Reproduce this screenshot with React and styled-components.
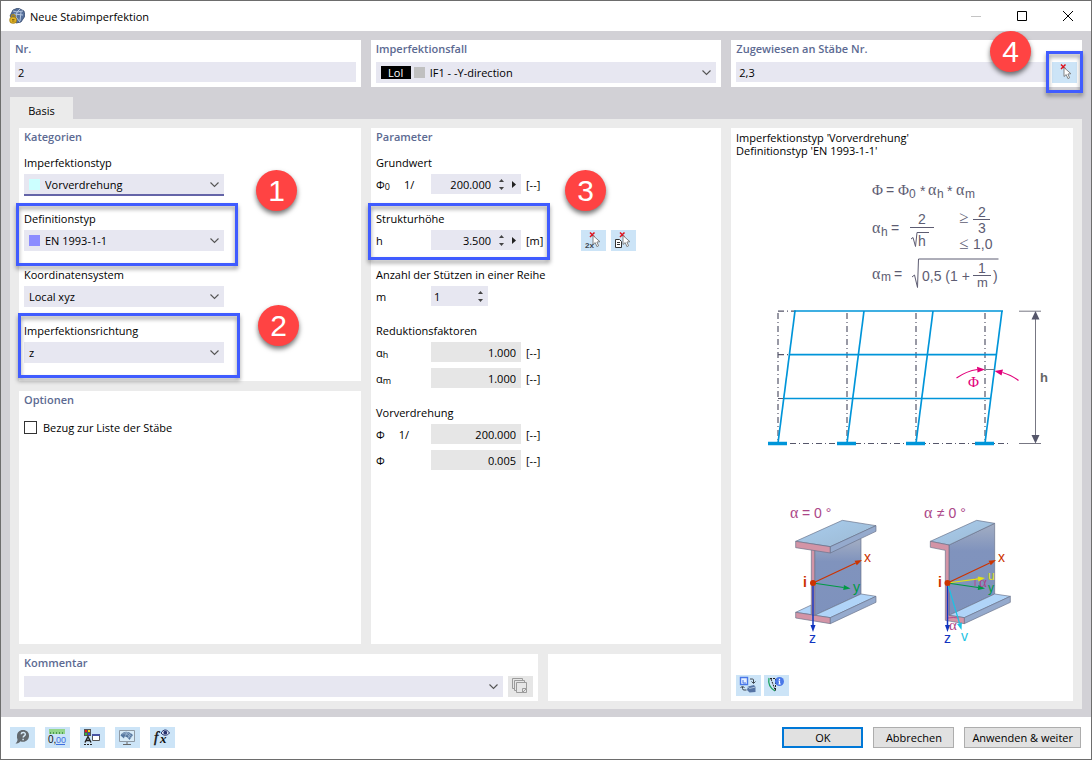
import React from 'react'
import styled, { createGlobalStyle, css } from "styled-components";

const GlobalStyle = createGlobalStyle`
* {
  box-sizing: border-box;
}
body {
  margin: 0;
  background: #fff;
}
body, input, select, button {
  font-family: "Open Sans", "Noto Sans", sans-serif;
  font-size: 11px;
  color: #000;
}
`;

const Window = styled.div`
display: flex;
flex-direction: column;
min-height: 100vh;
border: 1px solid #6d6d6d;
background: #fff;
`;

const TitleBar = styled.header`
display: flex;
align-items: center;
gap: 5px;
height: 30px;
padding-left: 8px;
`;

const Title = styled.h1`
flex: 1;
margin: 0;
font-size: 11px;
font-weight: 400;
`;

const CaptionButtons = styled.div`
display: flex;
`;

const CaptionButton = styled.button`
display: flex;
align-items: center;
justify-content: center;
width: 46px;
height: 30px;
padding: 0;
border: none;
background: none;
`;

const Body = styled.main`
flex: 1;
display: flex;
flex-direction: column;
padding: 9px 9px 8px;
background: #d2d1d6;
`;

const TopRow = styled.div`
display: grid;
grid-template-columns: repeat(3, minmax(0, 1fr));
gap: 10px;
margin-bottom: 10px;
`;

const Panel = styled.section`
position: relative;
padding: 0 5px 4px;
background: #fff;
`;

const PanelTitle = styled.h2`
margin: 0 0 ${props => props.$gap || 4}px;
font-size: 11px;
font-weight: 600;
line-height: 18px;
color: #5c6a92;
`;

const Tab = styled.button`
align-self: flex-start;
width: 63px;
height: 22px;
padding: 4px 0 0;
border: none;
background: #ebebeb;
`;

const Page = styled.div`
flex: 1;
display: grid;
grid-template-columns: minmax(0, 702fr) minmax(0, 342fr);
gap: 10px;
padding: 9px 9px 8px;
background: #ebebeb;
`;

const Main = styled.div`
display: flex;
flex-direction: column;
gap: 10px;
`;

const Columns = styled.div`
flex: 1;
display: grid;
grid-template-columns: minmax(0, 342fr) minmax(0, 350fr);
gap: 10px;
`;

const LeftColumn = styled.div`
display: grid;
grid-template-rows: 1fr 1fr;
gap: 10px;
`;

const BottomRow = styled.div`
display: grid;
grid-template-columns: minmax(0, 519fr) minmax(0, 173fr);
gap: 10px;
min-height: 47px;
`;

const InfoPanel = styled(Panel)`
display: flex;
flex-direction: column;
padding: 3px 5px 5px;
`;

const InfoText = styled.p`
margin: 0;
line-height: 13px;
`;

const Drawing = styled.svg`
display: block;
width: 100%;
height: auto;
margin-top: ${props => props.$space}px;
`;

const InfoTools = styled.div`
display: flex;
gap: 3px;
margin-top: auto;
`;

const Fields = styled.div`
display: flex;
flex-direction: column;
gap: ${props => props.$gap}px;
`;

const Field = styled.div`
display: flex;
flex-direction: column;
`;

const Label = styled.label`
margin-bottom: 2px;
line-height: 18px;
`;

const Group = styled.div`
display: flex;
flex-direction: column;
gap: 6px;
`;

const GroupTitle = styled.div`
margin-bottom: -4px;
line-height: 18px;
`;

const Line = styled.div`
display: flex;
gap: 5px;
`;

const TextInput = styled.input`
flex: 1;
min-width: 0;
width: 100%;
height: 20px;
padding: 1px 3px 0;
border: none;
outline: none;
background: #e7e7f1;
`;

const SelectBox = styled.div`
display: grid;
flex: ${props => props.$wide ? 1 : "none"};
width: ${props => props.$wide ? "auto" : "200px"};
height: 21px;
align-items: center;
background: #e7e7f1;
${props => props.$focused && css`
box-shadow: inset 0 -1px #6464a8, 0 1px #6464a8;
`}
> * {
  grid-area: 1 / 1;
}
> svg {
  justify-self: end;
  margin-right: 5px;
  pointer-events: none;
}
`;

const StyledSelect = styled.select`
appearance: none;
align-self: start;
width: 100%;
height: 20px;
padding: 0 20px 0 ${props => props.$indent}px;
border: none;
outline: none;
background: none;
`;

const Marks = styled.span`
display: flex;
align-items: center;
gap: 3px;
padding-left: 5px;
pointer-events: none;
`;

const Swatch = styled.span`
width: 11px;
height: 11px;
background: ${props => props.$color};
`;

const CaseTag = styled.span`
width: 30px;
height: 13px;
line-height: 13px;
text-align: center;
color: #fff;
background: #000;
`;

const Row = styled.div`
display: flex;
align-items: center;
height: 20px;
`;

const Symbol = styled.label`
display: flex;
gap: 14px;
width: 55px;
sub {
  font-size: 9px;
  line-height: 1;
  vertical-align: -1px;
}
`;

const NumberBox = styled.div`
display: flex;
align-items: center;
gap: 5px;
width: ${props => props.$narrow ? 57 : 90}px;
height: 20px;
padding-right: 4px;
background: ${props => props.$readOnly ? "#e6e6e6" : "#e7e7f1"};
`;

const NumberInput = styled.input`
flex: 1;
min-width: 0;
height: 20px;
padding: 1px ${props => props.readOnly ? 1 : 2}px 0 3px;
border: none;
outline: none;
background: none;
text-align: ${props => props.$left ? "left" : "right"};
`;

const Spinner = styled.span`
display: flex;
flex-direction: column;
gap: 1px;
`;

const SmallButton = styled.button`
display: flex;
align-items: center;
justify-content: center;
width: 7px;
height: 7px;
padding: 0;
border: none;
background: none;
`;

const Unit = styled.span`
width: 60px;
padding-left: 5px;
`;

const IconButton = styled.button`
flex: none;
width: 25px;
height: 21px;
padding: 0;
border: none;
background: ${props => props.disabled ? "#e6e6e6" : "#cce4f7"};
svg {
  display: block;
}
`;

const RowTools = styled.div`
display: flex;
gap: 5px;
`;

const CheckLabel = styled.label`
display: flex;
align-items: center;
gap: 6px;
height: 20px;
`;

const Checkbox = styled.input`
appearance: none;
width: 13px;
height: 13px;
margin: 0;
border: 1px solid #333;
background: #fff;
&:checked {
  background: #5c6a92;
}
`;

const Footer = styled.footer`
display: flex;
align-items: center;
gap: 10px;
height: 42px;
padding: 0 10px 1px 9px;
`;

const FooterTools = styled.div`
flex: 1;
display: flex;
gap: 10px;
`;

const DialogButton = styled.button`
min-width: 81px;
height: 21px;
padding: 0 7px;
border: ${props => props.$primary ? "2px solid #0078d7" : "1px solid #adadad"};
background: #e1e1e1;
white-space: nowrap;
`;

const Highlight = styled.div`
position: absolute;
z-index: 1;
border: 3px solid #405cff;
filter: drop-shadow(0 3px 2px rgba(0, 0, 0, 0.4));
pointer-events: none;
`;

const TypeHighlight = styled(Highlight)`
top: 75px;
left: -3px;
width: 222px;
height: 63px;
`;

const DirectionHighlight = styled(Highlight)`
top: 185px;
left: -1px;
width: 222px;
height: 65px;
`;

const HeightHighlight = styled(Highlight)`
top: 75px;
left: -3px;
width: 182px;
height: 57px;
`;

const PickHighlight = styled(Highlight)`
top: 11px;
right: -1px;
width: 37px;
height: 42px;
`;

const Step = styled.div`
position: absolute;
z-index: 2;
top: ${props => props.$top}px;
left: ${props => props.$left};
right: ${props => props.$right};
width: 41px;
height: 41px;
border-radius: 50%;
background: #ff4343;
box-shadow: 0 3px 5px rgba(0, 0, 0, 0.55);
color: #fff;
font: 30px/41px "Liberation Sans", Arial, sans-serif;
text-align: center;
`;

const Chevron = () => (
  <svg width="9" height="6" viewBox="0 0 9 6" fill="none" stroke="#555" strokeWidth="1.1">
    <path d="M.5.5l4 4 4-4" />
  </svg>
);

const AppIcon = () => (
  <svg width="16" height="16" viewBox="0 0 16 16">
    <path d="M1 8L4 2 9 0l6 3 1 5-4 6-5 1z" fill="#56709c" stroke="#34476b" strokeWidth=".8" />
    <path d="M4 3l4 1 6-1M8 4l-1 5 4 5M8 4l3-3M12 4l-1 9M5 6l9 1" fill="none" stroke="#b5c7e0" />
    <path d="M2.500 9.500V8.500a1.800 1.800 0 0 1 3.600 0v1" fill="none" stroke="#b18a16" strokeWidth="1.300" />
    <rect x=".8" y="9" width="6.700" height="6.200" rx="2.500" fill="#e3b526" stroke="#9a7714" strokeWidth=".8" />
    <path d="M3 11.500h2.500M3 13h2.500" stroke="#8a6a10" />
  </svg>
);

const Pointer = () => (
  <>
    <path d="M9 2.500l4.500 4.500M13.500 2.500L9 7" stroke="#e0101c" strokeWidth="1.500" />
    <path d="M12 5.500v9l2.200-1.900 1.700 4 1.700-.8-1.700-3.800 3-.3z" fill="#fff" stroke="#777" strokeWidth=".9" />
  </>
);

const Icon = ({ children }) => (
  <svg width="25" height="21" viewBox="0 0 25 21" fill="none">{children}</svg>
);

const PickIcon = () => <Icon><Pointer /></Icon>;

const PickTwoIcon = () => (
  <Icon>
    <Pointer />
    <text x="4" y="18" fontSize="8" fontWeight="700" fontFamily="Liberation Sans, sans-serif" fill="#3d4650">2x</text>
  </Icon>
);

const PickListIcon = () => (
  <Icon>
    <path d="M4.500 9.500h4l2 2v6h-6z" fill="#fff" stroke="#333" />
    <path d="M6 12.500h3M6 14.500h3" stroke="#333" />
    <Pointer />
  </Icon>
);

const CopyIcon = () => (
  <Icon>
    <g fill="#e6e6e6" stroke="#9b9b9b">
      <path d="M4.500 2.500h10v10h-10z" />
      <path d="M6.500 4.500h10v10h-10z" />
      <path d="M8.500 6.500h10v10h-10z" />
      <path d="M14.500 16.500v-4h4M15 16l3-3" />
    </g>
  </Icon>
);

const HelpIcon = () => (
  <Icon>
    <path d="M13 3c3.700 0 6 2.300 6 5.700 0 3.500-2.500 6-6 6-1 0-1.800-.1-2.500-.5-1 1.500-3 2.300-5 2.300 1.200-.9 2-2.500 2-4A6 6 0 0 1 7 9c0-3.500 2.500-6 6-6z" fill="#63696e" />
    <path d="M11.200 7.300c.2-2.500 4.300-2.300 4.100.1-.1 1.500-2.100 1.500-2.100 3.100M13.100 11.800v1.400" stroke="#d5e8f6" strokeWidth="1.500" />
  </Icon>
);

const UnitsIcon = () => (
  <Icon>
    <path d="M4 2h16v5H4z" fill="#93d58b" />
    <path d="M5.500 7V5M8.500 7V5M11.500 7V5M14.500 7V5M17.500 7V5" stroke="#4c9a4e" />
    <text x="3" y="16" fontSize="10" fontFamily="Liberation Sans, sans-serif" fill="#111">0,</text>
    <text x="11" y="16" fontSize="9" fontFamily="Liberation Sans, sans-serif" fill="#3e6fe0">00</text>
    <path d="M11 17.500h9" stroke="#3e6fe0" />
  </Icon>
);

const DisplayIcon = () => (
  <Icon>
    <path d="M4 2h7v7H4z" fill="#555" />
    <path d="M5 3h2v2H5z" fill="#ef1c1c" />
    <path d="M8 3h2v2H8z" fill="#f4d911" />
    <path d="M5 6h2v2H5z" fill="#37b53c" />
    <path d="M8 6h2v2H8z" fill="#374bd9" />
    <path d="M5 15.500l3-6 3 6M6.500 13.500h3" stroke="#222" strokeWidth="1.400" />
    <path d="M4 17.500h8" stroke="#222" strokeDasharray="2 1" />
    <path d="M12 12.500h1" stroke="#222" />
    <path d="M12.500 7.500h7v6h-7z" fill="#fff" stroke="#555" />
    <path d="M12 8h8" stroke="#4854a3" strokeWidth="2" />
  </Icon>
);

const ScreenIcon = () => (
  <Icon>
    <path d="M4.500 3.500h15v11h-15z" fill="#d8ebf8" stroke="#8f9aa5" />
    <path d="M5.500 8.500C8 4 13 3.500 18 8l-3.500 5C13 10.500 11 9.500 9.500 9.500l-.5 2z" fill="#56779f" />
    <path d="M7 7c4-1 7 1 8.500 4M9.500 5.500c3.500 0 5.500 1.500 7 4M12.500 5c-1 1.500-2 3-2 4.500M15.500 6.500c-1.200 1.500-2 3-2.200 4.500" stroke="#b5cbe2" strokeWidth=".6" />
    <path d="M12 15v2M8 17.500h8" stroke="#666" />
  </Icon>
);

const FormulaIcon = () => (
  <Icon>
    <text x="4" y="15" fontSize="15" fontStyle="italic" fontFamily="Liberation Serif, serif" fill="#111" stroke="#111" strokeWidth=".4">f</text>
    <text x="10" y="16" fontSize="13" fontStyle="italic" fontWeight="700" fontFamily="Liberation Serif, serif" fill="#111">x</text>
    <path d="M11 6c2.500-4 6-4 8.500 0-2.500 3-6 3-8.500 0z" fill="#e6edfa" stroke="#26306c" />
    <circle cx="15.300" cy="5.700" r="1.900" fill="#26306c" />
  </Icon>
);

const SwapIcon = () => (
  <Icon>
    <path d="M4.500 2.500h7v7h-7z" fill="#e9f1ff" stroke="#4a78e8" strokeWidth="1.400" />
    <path d="M7 5v3h3" stroke="#4a78e8" />
    <path d="M14 4h2.500q1 0 1 1v3M15.500 6.500l2 2 2-2M10.500 15H8q-1.500 0-1.500-1.500V12M4.500 13l2-2 2 2" stroke="#3d4650" />
    <path d="M12 11.500l6-1.500 1.500 2v5l-6 .5L11 15z" fill="#5674a5" />
    <path d="M12 11.500l1.500 2 6-1.500" stroke="#a9bdd8" />
  </Icon>
);

const ShapeInfoIcon = () => (
  <Icon>
    <path d="M5 3c-1 5 1 10 6 13" stroke="#1fa463" strokeWidth="1.300" />
    <path d="M6 3.500h5.500V16M7 4l4.500 12" stroke="#222" strokeDasharray="2 1" />
    <circle cx="15.500" cy="6.500" r="4.500" fill="#4a78e8" />
    <path d="M15.500 3.700v1.200M14.500 6h1v3M14.500 9h2.200" stroke="#fff" strokeWidth="1.200" />
  </Icon>
);

const Select = ({ id, value, color, tag, wide, focused, label }) => {
  let indent = 5;
  if (color) indent = 21;
  if (tag) indent = 54;
  return (
    <SelectBox $wide={wide} $focused={focused}>
      {(color || tag) &&
        <Marks>
          {tag && <CaseTag>{tag}</CaseTag>}
          <Swatch $color={color} />
        </Marks>}
      <StyledSelect id={id} $indent={indent} aria-label={label}>
        <option>{value}</option>
      </StyledSelect>
      <Chevron />
    </SelectBox>
  )
}

const SelectField = ({ id, label, ...rest }) => (
  <Field>
    <Label htmlFor={id}>{label}</Label>
    <Select id={id} {...rest} />
  </Field>
);

const NumberRow = ({ id, symbol, sub, prefix, value, unit, editable, menu, children }) => (
  <Row>
    <Symbol htmlFor={id}>
      <span>{symbol}{sub && <sub>{sub}</sub>}</span>
      {prefix && <span>{prefix}</span>}
    </Symbol>
    <NumberBox $readOnly={!editable} $narrow={editable && !menu}>
      <NumberInput id={id} defaultValue={value} readOnly={!editable} $left={editable && !menu} />
      {editable &&
        <Spinner>
          <SmallButton aria-label="Erhöhen">
            <svg width="5" height="3" viewBox="0 0 5 3"><path d="M0 3L2.500 0 5 3z" fill="#444" /></svg>
          </SmallButton>
          <SmallButton aria-label="Verringern">
            <svg width="5" height="3" viewBox="0 0 5 3"><path d="M0 0l2.500 3L5 0z" fill="#444" /></svg>
          </SmallButton>
        </Spinner>}
      {menu &&
        <SmallButton aria-label="Mehr">
          <svg width="4" height="7" viewBox="0 0 4 7"><path d="M0 0l4 3.500L0 7z" fill="#222" /></svg>
        </SmallButton>}
    </NumberBox>
    {unit && <Unit>{unit}</Unit>}
    {children && <RowTools>{children}</RowTools>}
  </Row>
);

const Arrow = ({ from, to, color, size = 7, width = 1.2 }) => {
  const angle = Math.atan2(to[1] - from[1], to[0] - from[0]);
  const bx = to[0] - size * Math.cos(angle);
  const by = to[1] - size * Math.sin(angle);
  const dx = size * 0.36 * Math.sin(angle);
  const dy = size * 0.36 * Math.cos(angle);
  return (
    <g fill={color} stroke="none">
      <path d={`M${from[0]} ${from[1]}L${bx} ${by}`} stroke={color} strokeWidth={width} />
      <path d={`M${to[0]} ${to[1]}L${bx + dx} ${by - dy}L${bx - dx} ${by + dy}z`} />
    </g>
  )
}

const SANS = "Liberation Sans, Arial, sans-serif";
const SERIF = "Liberation Serif, serif";

const Greek = ({ children, ...rest }) => <text fontFamily={SERIF} fontSize="15" {...rest}>{children}</text>;

const FormulaDrawing = () => (
  <Drawing viewBox="736 158 332 298" $space={1} role="img" aria-label="Vorverdrehung">
    <g fill="#5d5c72" fontFamily={SANS} fontSize="14">
      <Greek x="872" y="195">Φ</Greek>
      <text x="886" y="195">=</text>
      <Greek x="898" y="195">Φ</Greek>
      <text x="909" y="198" fontSize="12">0</text>
      <text x="920" y="196">*</text>
      <Greek x="928" y="195" fontSize="16">α</Greek>
      <text x="937" y="198" fontSize="12">h</text>
      <text x="947" y="196">*</text>
      <Greek x="956" y="195" fontSize="16">α</Greek>
      <text x="965" y="198" fontSize="12">m</text>

      <Greek x="872" y="233" fontSize="16">α</Greek>
      <text x="881" y="236" fontSize="12">h</text>
      <text x="891" y="233">=</text>
      <text x="918" y="224">2</text>
      <text x="918" y="246">h</text>
      <Greek x="959" y="223" fontSize="17">≥</Greek>
      <text x="978" y="217">2</text>
      <text x="978" y="233">3</text>
      <Greek x="959" y="249" fontSize="17">≤</Greek>
      <text x="973" y="249">1,0</text>

      <Greek x="872" y="279" fontSize="16">α</Greek>
      <text x="881" y="281" fontSize="12">m</text>
      <text x="894" y="279">=</text>
      <text x="922" y="281">0,5 (1 +</text>
      <text x="978" y="273">1</text>
      <text x="977" y="287" fontSize="13">m</text>
      <text x="993" y="281">)</text>
    </g>
    <g fill="none" stroke="#5d5c72">
      <path d="M910 227.500h24M973 219.500h17M973 275.500h18" />
      <path d="M911 239l2-1.500 2.500 9 1.500-14H929" />
      <path d="M912 277l2.500-2 3 12.500 1-28.500H998.500" />
    </g>

    <g fill="none" stroke="#55566a" strokeWidth="1.200" strokeDasharray="6 3 1 3">
      {[778, 847, 916, 985].map(x => <path key={x} d={`M${x} 313V442`} />)}
      <path d="M778 311.200h18M778 354.700h12M778 398.500h8M790 443.500H1008" />
    </g>
    <g fill="none" stroke="#0095d9" strokeWidth="1.700">
      {[778, 847, 916, 985].map(x => <path key={x} d={`M${x} 443L${x + 17} 311`} />)}
      <path d="M794 311H1003M789.500 354.700H997M784 398.500H991" />
      {[778, 847, 916, 985].map(x => <path key={x} d={`M${x - 10} 443.500h19`} strokeWidth="3.500" />)}
    </g>
    <path d="M1019 311.200h22M1019 443.500h22M1035.500 313v128M986 369.500h8" fill="none" stroke="#777783" />
    <path d="M1035.500 311l4 8.500h-8zM1035.500 443.500l4-8.500h-8z" fill="#55566a" />
    <text x="1040" y="382" fontSize="13" fontWeight="700" fontFamily={SANS} fill="#666">h</text>
    <g fill="none" stroke="#e2007a" strokeWidth="1.200">
      <path d="M956.500 378q10-7 21-8.500M1018.500 380.500q-7-5.500-16-8" />
      <path d="M985 369.500l-8-2.700.5 5.600zM994.500 371l8.500-1.500-1.500 6z" fill="#e2007a" stroke="none" />
    </g>
    <Greek x="968" y="387" fill="#e2007a">Φ</Greek>
  </Drawing>
);

const BeamDrawing = () => (
  <Drawing viewBox="736 502 332 148" $space={46} role="img" aria-label="Stabachsen">
    <defs>
      <linearGradient id="web" x1="0" y1="0" x2="0" y2="1">
        <stop offset="0" stopColor="#a3aec3" />
        <stop offset=".3" stopColor="#8093bd" />
        <stop offset="1" stopColor="#7e92bd" />
      </linearGradient>
      <linearGradient id="flange" x1="0" y1="0" x2="1" y2="1">
        <stop offset="0" stopColor="#a9cdee" />
        <stop offset="1" stopColor="#9cb9d3" />
      </linearGradient>
    </defs>
    <g transform="translate(760 490) scale(.33333)" stroke="#68718a" strokeWidth="2" strokeLinejoin="round">
      <path d="M164 146H303V312L164 376z" fill="url(#web)" />
      <path d="M107 367l47-22v29zM164 376L303 312l45 7L211 383z" fill="#b0d4f8" />
      <path d="M107 367l104 16v18L107 384z" fill="#d394a6" />
      <path d="M211 383l137-64v18L211 401z" fill="#95aacd" />
      <path d="M154 176l10 2v198l-10-2z" fill="#d394a6" />
      <path d="M107 154L247 91l101 16L211 170z" fill="url(#flange)" />
      <path d="M107 154l104 16v19L107 173z" fill="#d394a6" />
      <path d="M211 170l137-63v17L211 189z" fill="#95aacd" />

      <path d="M567 165L704 100V312L567 376z" fill="url(#web)" />
      <path d="M567 376L704 312l47 7L613 383z" fill="#b0d4f8" />
      <path d="M613 383l138-64v18L613 401z" fill="#95aacd" />
      <path d="M511 154l139-63 54 9L567 165z" fill="url(#flange)" />
      <path d="M511 154l56 11V376l46 7v18l-57-10V181l-45-9z" fill="#d394a6" />
    </g>
    <g fill="none" stroke="#b34a8e">
      <path d="M975 578v8M948 618q5-1 11 0" />
    </g>
    <Arrow from={[813, 583]} to={[813, 632]} color="#1034c0" width={1.5} />
    <Arrow from={[813, 583]} to={[850.500, 588.500]} color="#009a44" />
    <Arrow from={[813, 583]} to={[862, 560]} color="#cc3300" />
    <Arrow from={[947.500, 583]} to={[947.500, 632]} color="#1034c0" width={1.5} />
    <Arrow from={[947.500, 583]} to={[961.500, 630]} color="#1cc3e4" />
    <Arrow from={[947.500, 583]} to={[985, 588.500]} color="#009a44" />
    <Arrow from={[947.500, 583]} to={[985, 578]} color="#e3e315" />
    <Arrow from={[947.500, 583]} to={[996, 560]} color="#cc3300" />
    <circle cx="813" cy="583" r="3" fill="#cc3300" />
    <circle cx="947.500" cy="583" r="3" fill="#cc3300" />
    <g fontFamily={SANS} fontSize="14">
      <g fill="#cc3300">
        <text x="803" y="587" fontWeight="700">i</text>
        <text x="864" y="562">x</text>
        <text x="938" y="587" fontWeight="700">i</text>
        <text x="998" y="562">x</text>
      </g>
      <text x="853" y="592" fill="#009a44">y</text>
      <text x="809" y="643" fill="#1034c0">z</text>
      <text x="988" y="580" fontSize="12" fill="#e3e315">u</text>
      <text x="988" y="592" fontSize="12" fill="#009a44">y</text>
      <text x="944" y="643" fill="#1034c0">z</text>
      <text x="961" y="641" fill="#1cc3e4">v</text>
    </g>
    <g fill="#ab4688" fontFamily={SANS} fontSize="14">
      <Greek x="979" y="587">α</Greek>
      <Greek x="949" y="630">α</Greek>
      <Greek x="790" y="518" fontSize="16">α</Greek>
      <text x="802" y="518">= 0 °</text>
      <Greek x="924" y="518" fontSize="16">α</Greek>
      <text x="937" y="518">≠ 0 °</text>
    </g>
  </Drawing>
);

const App = () => {
  return (
    <Window>
      <GlobalStyle />
      <TitleBar>
        <AppIcon />
        <Title>Neue Stabimperfektion</Title>
        <CaptionButtons>
          <CaptionButton aria-label="Minimieren">
            <svg width="10" height="10" viewBox="0 0 10 10"><path d="M0 5.500h10" stroke="#c4c4c4" /></svg>
          </CaptionButton>
          <CaptionButton aria-label="Maximieren">
            <svg width="10" height="10" viewBox="0 0 10 10"><path d="M.5.5h9v9h-9z" fill="none" stroke="#000" /></svg>
          </CaptionButton>
          <CaptionButton aria-label="Schließen">
            <svg width="10" height="10" viewBox="0 0 10 10"><path d="M0 0l10 10M10 0L0 10" stroke="#000" /></svg>
          </CaptionButton>
        </CaptionButtons>
      </TitleBar>

      <Body>
        <TopRow>
          <Panel>
            <PanelTitle>Nr.</PanelTitle>
            <Line>
              <TextInput defaultValue="2" aria-label="Nr." />
            </Line>
          </Panel>
          <Panel>
            <PanelTitle>Imperfektionsfall</PanelTitle>
            <Select value="IF1 - -Y-direction" tag="Lol" color="#c0c0c0" label="Imperfektionsfall" wide />
          </Panel>
          <Panel>
            <PanelTitle>Zugewiesen an Stäbe Nr.</PanelTitle>
            <Line>
              <TextInput defaultValue="2,3" aria-label="Zugewiesen an Stäbe Nr." />
              <IconButton aria-label="Stäbe auswählen"><PickIcon /></IconButton>
            </Line>
            <PickHighlight />
            <Step $top={-9} $right="51px">4</Step>
          </Panel>
        </TopRow>

        <Tab>Basis</Tab>
        <Page>
          <Main>
            <Columns>
              <LeftColumn>
                <Panel>
                  <PanelTitle $gap={8}>Kategorien</PanelTitle>
                  <Fields $gap={15}>
                    <SelectField id="typ" label="Imperfektionstyp" value="Vorverdrehung" color="#ccffff" focused />
                    <SelectField id="definition" label="Definitionstyp" value="EN 1993-1-1" color="#8c8cff" />
                    <SelectField id="system" label="Koordinatensystem" value="Local xyz" />
                    <SelectField id="richtung" label="Imperfektionsrichtung" value="z" />
                  </Fields>
                  <TypeHighlight />
                  <DirectionHighlight />
                  <Step $top={42} $left="237px">1</Step>
                  <Step $top={177} $left="239px">2</Step>
                </Panel>
                <Panel>
                  <PanelTitle $gap={8}>Optionen</PanelTitle>
                  <CheckLabel>
                    <Checkbox type="checkbox" />
                    Bezug zur Liste der Stäbe
                  </CheckLabel>
                </Panel>
              </LeftColumn>

              <Panel>
                <PanelTitle $gap={8}>Parameter</PanelTitle>
                <Fields $gap={16}>
                  <Group>
                    <GroupTitle>Grundwert</GroupTitle>
                    <NumberRow id="phi0" symbol="Φ" sub="0" prefix="1/" value="200.000" unit="[--]" editable menu />
                  </Group>
                  <Group>
                    <GroupTitle>Strukturhöhe</GroupTitle>
                    <NumberRow id="h" symbol="h" value="3.500" unit="[m]" editable menu>
                      <IconButton aria-label="Zwei Punkte auswählen"><PickTwoIcon /></IconButton>
                      <IconButton aria-label="Aus Liste auswählen"><PickListIcon /></IconButton>
                    </NumberRow>
                  </Group>
                  <Group>
                    <GroupTitle>Anzahl der Stützen in einer Reihe</GroupTitle>
                    <NumberRow id="m" symbol="m" value="1" editable />
                  </Group>
                  <Group>
                    <GroupTitle>Reduktionsfaktoren</GroupTitle>
                    <NumberRow id="alphah" symbol="α" sub="h" value="1.000" unit="[--]" />
                    <NumberRow id="alpham" symbol="α" sub="m" value="1.000" unit="[--]" />
                  </Group>
                  <Group>
                    <GroupTitle>Vorverdrehung</GroupTitle>
                    <NumberRow id="phi1" symbol="Φ" prefix="1/" value="200.000" unit="[--]" />
                    <NumberRow id="phi" symbol="Φ" value="0.005" unit="[--]" />
                  </Group>
                </Fields>
                <HeightHighlight />
                <Step $top={42} $left="194px">3</Step>
              </Panel>
            </Columns>

            <BottomRow>
              <Panel>
                <PanelTitle>Kommentar</PanelTitle>
                <Line>
                  <Select value="" label="Kommentar" wide />
                  <IconButton aria-label="Kommentare" disabled><CopyIcon /></IconButton>
                </Line>
              </Panel>
              <Panel />
            </BottomRow>
          </Main>

          <InfoPanel>
            <InfoText>Imperfektionstyp 'Vorverdrehung'</InfoText>
            <InfoText>Definitionstyp 'EN 1993-1-1'</InfoText>
            <FormulaDrawing />
            <BeamDrawing />
            <InfoTools>
              <IconButton aria-label="Ansicht wechseln"><SwapIcon /></IconButton>
              <IconButton aria-label="Info"><ShapeInfoIcon /></IconButton>
            </InfoTools>
          </InfoPanel>
        </Page>
      </Body>

      <Footer>
        <FooterTools>
          <IconButton aria-label="Hilfe"><HelpIcon /></IconButton>
          <IconButton aria-label="Einheiten"><UnitsIcon /></IconButton>
          <IconButton aria-label="Anzeige"><DisplayIcon /></IconButton>
          <IconButton aria-label="Grafik"><ScreenIcon /></IconButton>
          <IconButton aria-label="Formel"><FormulaIcon /></IconButton>
        </FooterTools>
        <DialogButton $primary>OK</DialogButton>
        <DialogButton>Abbrechen</DialogButton>
        <DialogButton>Anwenden &amp; weiter</DialogButton>
      </Footer>
    </Window>
  )
}

export default App
